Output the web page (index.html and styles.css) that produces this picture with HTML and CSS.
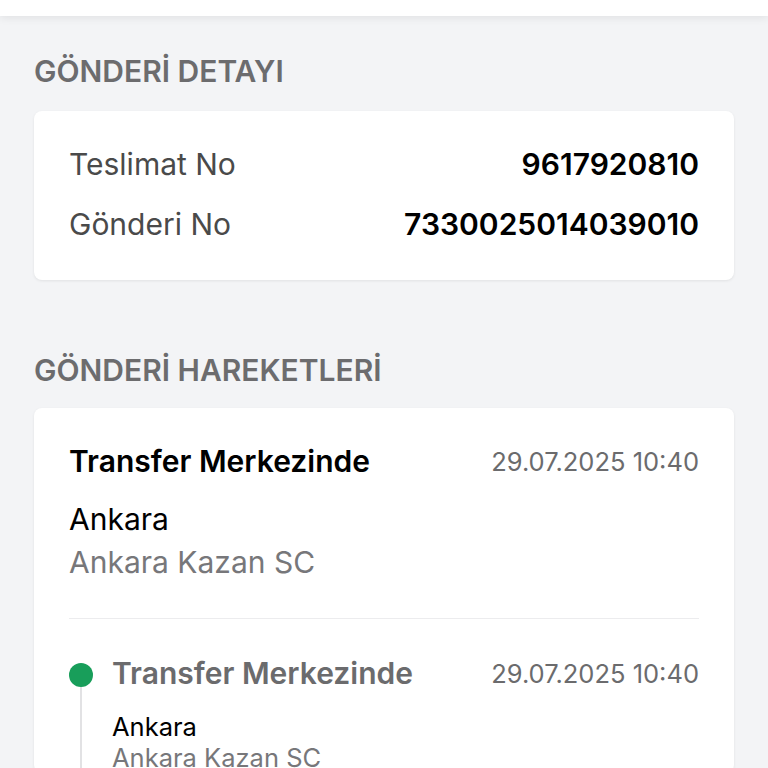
FILE: index.html
```html
<!DOCTYPE html>
<html lang="tr">

<head>
    <meta charset="UTF-8">
    <meta name="viewport" content="width=device-width, initial-scale=1.0">
    <title>Gönderi Detayı</title>
    <link rel="stylesheet" href="styles.css">
</head>

<body>
    <header class="topbar"></header>

    <main class="content">
        <h2 class="section-title">GÖNDERİ DETAYI</h2>
        <section class="card detail-card">
            <div class="detail-row">
                <span class="detail-label">Teslimat No</span>
                <span class="detail-value">9617920810</span>
            </div>
            <div class="detail-row">
                <span class="detail-label">Gönderi No</span>
                <span class="detail-value">7330025014039010</span>
            </div>
        </section>

        <h2 class="section-title moves-title">GÖNDERİ HAREKETLERİ</h2>
        <section class="card moves-card">
            <div class="last-move">
                <div class="move-head">
                    <span class="move-status">Transfer Merkezinde</span>
                    <span class="move-date">29.07.2025 10:40</span>
                </div>
                <div class="move-city">Ankara</div>
                <div class="move-branch">Ankara Kazan SC</div>
            </div>

            <hr class="divider">

            <ul class="timeline">
                <li class="timeline-item">
                    <div class="timeline-mark">
                        <span class="dot"></span>
                        <span class="line"></span>
                    </div>
                    <div class="timeline-body">
                        <div class="move-head">
                            <span class="move-status muted">Transfer Merkezinde</span>
                            <span class="move-date">29.07.2025 10:40</span>
                        </div>
                        <div class="timeline-city">Ankara</div>
                        <div class="timeline-branch">Ankara Kazan SC</div>
                    </div>
                </li>
            </ul>
        </section>
    </main>
</body>

</html>
```

FILE: styles.css
```css
body {
    font-family: Inter, "Noto Sans", sans-serif;
    background-color: #f3f4f6;
    color: #111;
    margin: 0;
    overflow: hidden;
}

.topbar {
    height: 16px;
    background-color: #fff;
    box-shadow: 0 2px 8px rgba(0, 0, 0, 0.08);
}

.content {
    padding: 39px 34px 0;
}

.section-title {
    margin: 0;
    font-size: 30px;
    line-height: 32px;
    font-weight: 600;
    color: #6c6c6e;
}

.moves-title {
    margin-top: 74px;
}

.card {
    background-color: #fff;
    border-radius: 8px;
    box-shadow: 0 1px 3px rgba(0, 0, 0, 0.08);
    margin-top: 24px;
}

.detail-card {
    padding: 33px 35px 36px;
    display: flex;
    flex-direction: column;
    gap: 20px;
}

.detail-row {
    display: flex;
    justify-content: space-between;
    align-items: center;
    height: 40px;
    font-size: 30px;
}

.detail-label {
    color: #4a4a4a;
}

.detail-value {
    font-weight: 600;
    color: #000;
}

.moves-card {
    margin-top: 22px;
    padding: 35px 35px 0;
}

.move-head {
    display: flex;
    justify-content: space-between;
    align-items: center;
    height: 36px;
}

.move-status {
    font-size: 30px;
    font-weight: 600;
    color: #000;
}

.move-status.muted {
    color: #6b6b6d;
}

.move-date {
    font-size: 25.5px;
    color: #6b6b6d;
}

.move-city {
    margin-top: 20px;
    font-size: 30px;
    line-height: 40px;
    color: #000;
}

.move-branch {
    font-size: 30px;
    line-height: 46px;
    color: #77777a;
}

.divider {
    border: 0;
    border-top: 1px solid #ececee;
    margin: 33px 0 0;
}

.timeline {
    list-style: none;
    margin: 0;
    padding: 0;
}

.timeline-item {
    display: flex;
    gap: 19px;
    padding-top: 36px;
}

.timeline-mark {
    width: 24px;
    display: flex;
    flex-direction: column;
    align-items: center;
    padding-top: 8px;
}

.dot {
    width: 24px;
    height: 24px;
    border-radius: 50%;
    background-color: #189e5a;
}

.line {
    flex: 1;
    width: 2px;
    background-color: #e2e2e4;
}

.timeline-body {
    flex: 1;
}

.timeline-city {
    margin-top: 20px;
    font-size: 25.5px;
    line-height: 32px;
    color: #000;
}

.timeline-branch {
    font-size: 25.5px;
    line-height: 30px;
    color: #77777a;
}
```
